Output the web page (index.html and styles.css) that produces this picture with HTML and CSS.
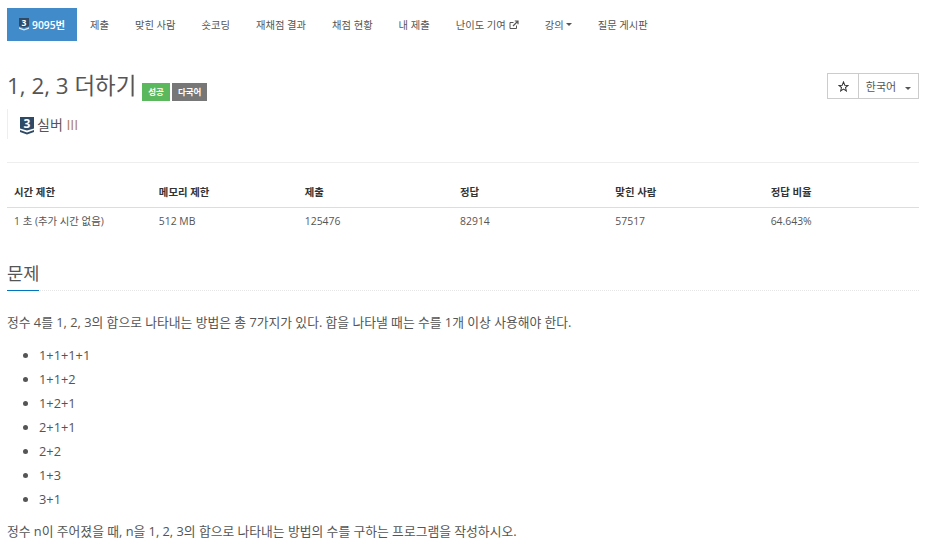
FILE: index.html
```html
<!DOCTYPE html>
<html lang="ko">
<head>
  <meta charset="UTF-8">
  <title>1, 2, 3 더하기</title>
  <link rel="stylesheet" href="styles.css">
</head>
<body>
  <ul class="problem-menu">
    <li class="active">
      <a href="#">
        <svg class="tier tier-small" viewBox="0 0 14 18"><path d="M0 0H14V11.5L7 13.5 0 11.5Z" fill="#2f4a66"/><path d="M0 13 7 15.5 14 13V15L7 17.5 0 15Z" fill="#dfe7ef"/><text x="7" y="10.5" class="tier-num">3</text></svg>9095번
      </a>
    </li>
    <li><a href="#">제출</a></li>
    <li><a href="#">맞힌 사람</a></li>
    <li><a href="#">숏코딩</a></li>
    <li><a href="#">재채점 결과</a></li>
    <li><a href="#">채점 현황</a></li>
    <li><a href="#">내 제출</a></li>
    <li>
      <a href="#">난이도 기여
        <svg class="ext" viewBox="0 0 10 10"><path d="M7.5 5.5V8.5H1V2.5H4.5" fill="none" stroke="#555" stroke-width="1"/><path d="M4 6 8.5 1.5M5.8 1H9V4.2" fill="none" stroke="#555" stroke-width="1.2"/></svg>
      </a>
    </li>
    <li><a href="#">강의<span class="caret"></span></a></li>
    <li><a href="#">질문 게시판</a></li>
  </ul>

  <div class="page-header">
    <div class="title-row">
      <h1 class="title">1, 2, 3 더하기</h1>
      <span class="label label-success">성공</span>
      <span class="label label-dark">다국어</span>
      <div class="btn-group">
        <button class="btn btn-star">
          <svg class="star" viewBox="0 0 12 12"><path d="M6 1 7.4 4.6 11 4.8 8.2 7.1 9.1 10.7 6 8.7 2.9 10.7 3.8 7.1 1 4.8 4.6 4.6Z" fill="none" stroke="#333" stroke-width="1.1"/></svg>
        </button>
        <button class="btn btn-lang">한국어<span class="caret"></span></button>
      </div>
    </div>
    <blockquote class="tier-line">
      <svg class="tier" viewBox="0 0 14 18"><path d="M0 0H14V11.5L7 13.5 0 11.5Z" fill="#2f4a66"/><path d="M0 13 7 15.5 14 13V15L7 17.5 0 15Z" fill="#2f4a66"/><text x="7" y="10.5" class="tier-num">3</text></svg>
      <span>실버 <span class="silver">III</span></span>
    </blockquote>
  </div>

  <table class="info-table">
    <thead>
      <tr>
        <th>시간 제한</th>
        <th>메모리 제한</th>
        <th>제출</th>
        <th>정답</th>
        <th>맞힌 사람</th>
        <th>정답 비율</th>
      </tr>
    </thead>
    <tbody>
      <tr>
        <td>1 초 (추가 시간 없음)</td>
        <td>512 MB</td>
        <td>125476</td>
        <td>82914</td>
        <td>57517</td>
        <td>64.643%</td>
      </tr>
    </tbody>
  </table>

  <div class="headline">
    <h2>문제</h2>
  </div>
  <div class="problem-text">
    <p>정수 4를 1, 2, 3의 합으로 나타내는 방법은 총 7가지가 있다. 합을 나타낼 때는 수를 1개 이상 사용해야 한다.</p>
    <ul>
      <li>1+1+1+1</li>
      <li>1+1+2</li>
      <li>1+2+1</li>
      <li>2+1+1</li>
      <li>2+2</li>
      <li>1+3</li>
      <li>3+1</li>
    </ul>
    <p>정수 n이 주어졌을 때, n을 1, 2, 3의 합으로 나타내는 방법의 수를 구하는 프로그램을 작성하시오.</p>
  </div>
</body>
</html>
```

FILE: styles.css
```css
html, body {
  overflow: hidden;
}

body {
  margin: 0;
  padding: 8px 9px 0 7px;
  font-family: "Open Sans", "Noto Sans CJK KR", sans-serif;
  font-size: 11px;
  color: #555;
  background-color: #fff;
}

.problem-menu {
  display: flex;
  list-style: none;
  margin: 0;
  padding: 0;
  font-size: 10.3px;
}

.problem-menu a {
  display: flex;
  align-items: center;
  height: 33px;
  padding: 0 13px;
  color: #555;
  text-decoration: none;
  white-space: nowrap;
}

.problem-menu .active a {
  padding: 0 12px;
  background-color: #428bca;
  color: #fff;
  font-weight: 600;
}

.tier {
  width: 14px;
  height: 18px;
  flex: none;
  margin-top: 3px;
  overflow: visible;
}

.tier-small {
  width: 10px;
  height: 13px;
  margin-top: 0;
  margin-right: 3px;
}

.tier-num {
  font-family: "Open Sans", sans-serif;
  font-size: 12px;
  font-weight: 700;
  fill: #fff;
  text-anchor: middle;
}

.ext {
  width: 10px;
  height: 10px;
  margin-left: 3px;
}

.caret {
  display: inline-block;
  width: 0;
  height: 0;
  margin-left: 2px;
  border-top: 3px solid #555;
  border-left: 3px solid transparent;
  border-right: 3px solid transparent;
}

.page-header {
  margin-top: 27px;
  padding-bottom: 23px;
  border-bottom: 1px solid #eee;
}

.title-row {
  display: flex;
  align-items: flex-end;
  height: 36px;
}

.title {
  margin: 0 6px 0 0;
  font-size: 22.4px;
  font-weight: 400;
  line-height: 36px;
}

.label {
  margin: 0 2px 3px 0;
  padding: 0 6px;
  height: 18px;
  line-height: 18px;
  font-size: 8.5px;
  font-weight: 700;
  color: #fff;
}

.label-success {
  background-color: #5cb85c;
}

.label-dark {
  background-color: #777;
}

.btn-group {
  display: flex;
  margin-left: auto;
  margin-bottom: 5px;
}

.btn {
  height: 26px;
  background-color: #fff;
  border: 1px solid #ccc;
  color: #555;
  font-family: inherit;
  font-size: 11px;
  padding: 0;
}

.btn-star {
  display: flex;
  align-items: center;
  justify-content: center;
  width: 32px;
}

.star {
  width: 11px;
  height: 11px;
}

.btn-lang {
  width: 61px;
  margin-left: -1px;
}

.btn-lang .caret {
  margin-left: 9px;
  vertical-align: middle;
}

.tier-line {
  display: flex;
  align-items: center;
  gap: 3px;
  margin: 5px 0 0;
  padding: 0 0 0 12px;
  height: 30px;
  border-left: 1px solid #eee;
  font-size: 14px;
}

.silver {
  color: #b08050;
}

.info-table {
  width: 912px;
  margin-top: 14px;
  border-collapse: collapse;
  table-layout: fixed;
}

.info-table th,
.info-table td {
  padding: 0 7px;
  text-align: left;
  font-size: 10.4px;
  line-height: 15px;
}

.info-table th {
  height: 30px;
  padding-top: 2px;
  color: #333;
  font-weight: 700;
  border-bottom: 1px solid #ddd;
  box-sizing: border-box;
}

.info-table td {
  height: 27px;
  padding-bottom: 2px;
}

.info-table th:nth-child(1) {
  width: 131.5px;
}

.info-table th:nth-child(2) {
  width: 132.5px;
}

.info-table th:nth-child(n+3) {
  width: 141px;
}

.headline {
  margin-top: 20px;
  border-bottom: 1px dotted #e5e5e5;
  height: 33px;
}

.headline h2 {
  display: inline-block;
  margin: 0;
  height: 33px;
  border-bottom: 1px solid #0076c0;
  font-size: 17.6px;
  font-weight: 400;
  line-height: 32px;
}

.problem-text {
  margin-top: 19px;
  font-size: 12.8px;
  line-height: 24px;
}

.problem-text p {
  margin: 0;
}

.problem-text ul {
  margin: 9px 0 8px;
  padding-left: 32px;
}
```
